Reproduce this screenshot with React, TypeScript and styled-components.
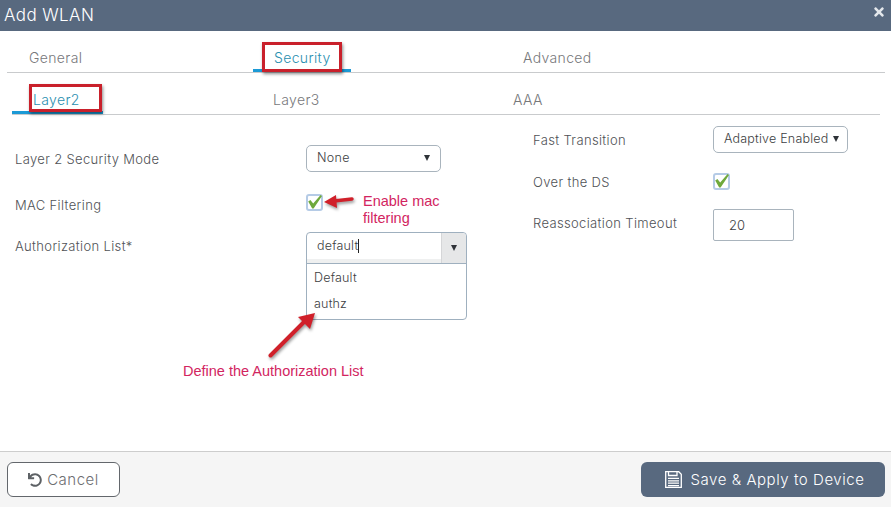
import React from 'react';
import styled, { createGlobalStyle } from 'styled-components';
import { FaTimes, FaUndo } from 'react-icons/fa';

const Global = createGlobalStyle`
  html, body { margin: 0; padding: 0; background: #fff; }
  #root { width: 891px; height: 507px; overflow: hidden; }
  * { box-sizing: border-box; }
`;

const Dialog = styled.div`
  position: relative;
  width: 891px;
  height: 507px;
  display: flex;
  flex-direction: column;
  font-family: Inter, "Liberation Sans", sans-serif;
  font-weight: 300;
  background: #fff;
  color: #58585b;
`;

const Header = styled.header`
  height: 31px;
  background: #58697f;
  display: flex;
  align-items: center;
  justify-content: space-between;
  padding: 0 5px 2px 4px;
  color: #fff;
  font-size: 17px;
  letter-spacing: 0.4px;
`;

const CloseIcon = styled(FaTimes)`
  width: 14px;
  height: 14px;
  color: #e4e8ec;
  margin-top: -6px;
`;

const TabBar = styled.nav<{ $level: 1 | 2 }>`
  height: 42px;
  margin: ${p => (p.$level === 1 ? '0 6px 0 7px' : '0 11px 0 12px')};
  border-bottom: 1px solid #c9cbcd;
  display: grid;
  grid-template-columns: ${p => (p.$level === 1 ? '246px 249px 1fr' : '241px 240px 1fr')};
`;

const Tab = styled.div<{ $active?: boolean; $width?: number; $pad: number }>`
  width: ${p => (p.$width ? `${p.$width}px` : 'auto')};
  padding-left: ${p => p.$pad}px;
  font-size: 14px;
  letter-spacing: 0.35px;
  line-height: 17px;
  padding-top: 18px;
  color: ${p => (p.$active ? '#2a8fb0' : '#77787b')};
  border-bottom: ${p => (p.$active ? '3px solid #1c9ad6' : 'none')};
  height: ${p => (p.$active ? '41px' : 'auto')};
`;

const Body = styled.main`
  flex: 1;
  display: grid;
  grid-template-columns: 518px 1fr;
  padding-left: 15px;
`;

const Column = styled.section<{ $top: number }>`
  padding-top: ${p => p.$top}px;
  display: flex;
  flex-direction: column;
`;

const Field = styled.div<{ $label: number; $height: number; $align?: string }>`
  display: grid;
  grid-template-columns: ${p => p.$label}px 1fr;
  height: ${p => p.$height}px;
  align-items: ${p => p.$align ?? 'center'};
`;

const Label = styled.label<{ $top?: number; $bottom?: number }>`
  font-size: 13px;
  letter-spacing: 0.35px;
  color: #505256;
  padding-top: ${p => p.$top ?? 0}px;
  padding-bottom: ${p => p.$bottom ?? 0}px;
`;

const Select = styled.div<{ $width: number; $pad: number; $spacing: number }>`
  width: ${p => p.$width}px;
  height: 27px;
  border: 1px solid #a9b4bd;
  border-radius: 5px;
  padding: 0 ${p => p.$pad}px 3px 10px;
  display: flex;
  align-items: center;
  justify-content: space-between;
  font-size: 12.5px;
  letter-spacing: ${p => p.$spacing}px;
  color: #3c3e42;
  background: #fff;
`;

const Caret = styled.span`
  width: 0;
  height: 0;
  margin-top: 2px;
  border-left: 3.5px solid transparent;
  border-right: 3.5px solid transparent;
  border-top: 6px solid #2f3338;
`;

const CheckBox = styled.span`
  position: relative;
  display: block;
  width: 17px;
  height: 17px;
  border: 2px solid #b5cbe6;
  border-radius: 3px;
  background: #fff;
`;

const CheckMark = styled.svg`
  position: absolute;
  left: -1px;
  top: -2px;
  overflow: visible;
`;

const Combo = styled.div`
  width: 161px;
  height: 88px;
  border: 1px solid #9fb0bf;
  border-radius: 4px;
  display: flex;
  flex-direction: column;
  font-size: 12.5px;
  color: #3c3e42;
  letter-spacing: 0.2px;
`;

const ComboHead = styled.div`
  height: 31px;
  display: flex;
  border-bottom: 1px solid #9fb0bf;
  border-top-left-radius: 4px;
  border-top-right-radius: 4px;
  overflow: hidden;
`;

const ComboInput = styled.div`
  flex: 1;
  padding: 5px 0 0 10px;
  border-bottom: 4px solid #eff0f0;
  line-height: 16px;
`;

const TextCursor = styled.span`
  display: inline-block;
  width: 1px;
  height: 14px;
  vertical-align: -3px;
  background: #222;
`;

const ComboButton = styled.div`
  width: 25px;
  background: #e6e7e8;
  border-left: 1px solid #d5d6d8;
  display: flex;
  align-items: center;
  justify-content: center;
  padding-bottom: 3px;
`;

const ComboItem = styled.div`
  height: 26px;
  padding: 6px 0 0 7px;
  line-height: 15px;
`;

const NumberBox = styled.div`
  width: 81px;
  height: 32px;
  border: 1px solid #a9b4bd;
  border-radius: 2px;
  padding-left: 15px;
  display: flex;
  align-items: center;
  font-size: 13px;
  color: #3c3e42;
`;

const Footer = styled.footer`
  height: 56px;
  background: #f5f5f5;
  border-top: 1px solid #cdcdcd;
  padding: 10px 6px 0 7px;
  display: flex;
  justify-content: space-between;
  align-items: flex-start;
`;

const CancelButton = styled.div`
  width: 113px;
  height: 35px;
  background: #fff;
  border: 1px solid #63676c;
  border-radius: 6px;
  display: flex;
  align-items: center;
  justify-content: center;
  gap: 5px;
  color: #6d6e71;
  font-size: 15px;
  letter-spacing: 0.5px;
  svg { width: 14px; height: 14px; color: #5d6165; }
`;

const SaveButton = styled.div`
  width: 244px;
  height: 35px;
  background: #58697f;
  border-radius: 6px;
  padding-left: 3px;
  display: flex;
  align-items: center;
  justify-content: center;
  gap: 9px;
  color: #fff;
  font-size: 15px;
  letter-spacing: 0.55px;
`;

const RedBox = styled.div<{ $x: number; $y: number; $w: number; $h: number }>`
  position: absolute;
  left: ${p => p.$x}px;
  top: ${p => p.$y}px;
  width: ${p => p.$w}px;
  height: ${p => p.$h}px;
  border: 3px solid #c9202b;
  box-shadow: 1px 2px 3px rgba(0,0,0,.45);
`;

const Note = styled.div<{ $x: number; $y: number }>`
  position: absolute;
  left: ${p => p.$x}px;
  top: ${p => p.$y}px;
  font-family: "Liberation Sans", Arial, sans-serif;
  font-weight: 400;
  font-size: 14.5px;
  line-height: 17px;
  color: #d2255f;
  white-space: pre;
`;

const Arrow = styled.svg<{ $x: number; $y: number }>`
  position: absolute;
  left: ${p => p.$x}px;
  top: ${p => p.$y}px;
  overflow: visible;
  filter: drop-shadow(1px 2px 1.5px rgba(0,0,0,.4));
`;

const SaveIcon = () => (
  <svg width="17" height="17" viewBox="0 0 17 17" fill="none" stroke="#fff" strokeWidth="1.3">
    <path d="M.7.7h13l2.6 2.6v13H.7z" />
    <path d="M3.5.7v3.8h8.5V.7" />
    <path d="M3 7.3h11M3 9.8h11M3 12.2h11M3 14.6h11" />
  </svg>
);

const Check = () => (
  <CheckMark width="16" height="16" viewBox="0 0 16 16">
    <path d="M1.2 7.6 L3.4 6 L6.2 9.6 L13.6 1 L15 2 L6.6 14.6 L5.2 14.6 Z" fill="#6fa93c" />
  </CheckMark>
);

export default function App() {
  return (
    <Dialog>
      <Global />
      <Header>
        <span>Add WLAN</span>
        <CloseIcon />
      </Header>
      <TabBar $level={1}>
        <Tab $pad={22}>General</Tab>
        <Tab $active $width={98} $pad={21}>Security</Tab>
        <Tab $pad={21}>Advanced</Tab>
      </TabBar>
      <TabBar $level={2}>
        <Tab $active $width={91} $pad={21}>Layer2</Tab>
        <Tab $pad={20}>Layer3</Tab>
        <Tab $pad={20}>AAA</Tab>
      </TabBar>
      <Body>
        <Column $top={30}>
          <Field $label={291} $height={27}>
            <Label>Layer 2 Security Mode</Label>
            <Select $width={135} $pad={10} $spacing={0.3}>None<Caret /></Select>
          </Field>
          <Field $label={291} $height={60}>
            <Label $top={6}>MAC Filtering</Label>
            <CheckBox><Check /></CheckBox>
          </Field>
          <Field $label={291} $height={88} $align="start">
            <Label $top={6}>Authorization List*</Label>
            <Combo>
              <ComboHead>
                <ComboInput>default<TextCursor /></ComboInput>
                <ComboButton><Caret /></ComboButton>
              </ComboHead>
              <ComboItem>Default</ComboItem>
              <ComboItem>authz</ComboItem>
            </Combo>
          </Field>
        </Column>
        <Column $top={11}>
          <Field $label={180} $height={27}>
            <Label>Fast Transition</Label>
            <Select $width={135} $pad={8} $spacing={0.2}>Adaptive Enabled<Caret /></Select>
          </Field>
          <Field $label={180} $height={56}>
            <Label $top={2}>Over the DS</Label>
            <CheckBox><Check /></CheckBox>
          </Field>
          <Field $label={180} $height={32}>
            <Label $bottom={4}>Reassociation Timeout</Label>
            <NumberBox>20</NumberBox>
          </Field>
        </Column>
      </Body>
      <Footer>
        <CancelButton><FaUndo />Cancel</CancelButton>
        <SaveButton><SaveIcon />Save &amp; Apply to Device</SaveButton>
      </Footer>

      <RedBox $x={262} $y={42} $w={80} $h={30} />
      <RedBox $x={29} $y={84} $w={73} $h={28} />
      <Note $x={363} $y={193}>{'Enable mac\nfiltering'}</Note>
      <Note $x={183} $y={363}>Define the Authorization List</Note>
      <Arrow $x={323} $y={194} width="32" height="16" viewBox="0 0 32 16">
        <path d="M29 5 L11 7" stroke="#d0202a" strokeWidth="3.5" strokeLinecap="round" fill="none" />
        <path d="M1 8 L13 1 L14 14 Z" fill="#d0202a" />
      </Arrow>
      <Arrow $x={268} $y={311} width="50" height="48" viewBox="0 0 50 48">
        <path d="M2.5 44.5 L36 11" stroke="#d0202a" strokeWidth="4" strokeLinecap="round" fill="none" />
        <path d="M47 2 L42 18 L30 6 Z" fill="#d0202a" />
      </Arrow>
    </Dialog>
  );
}
